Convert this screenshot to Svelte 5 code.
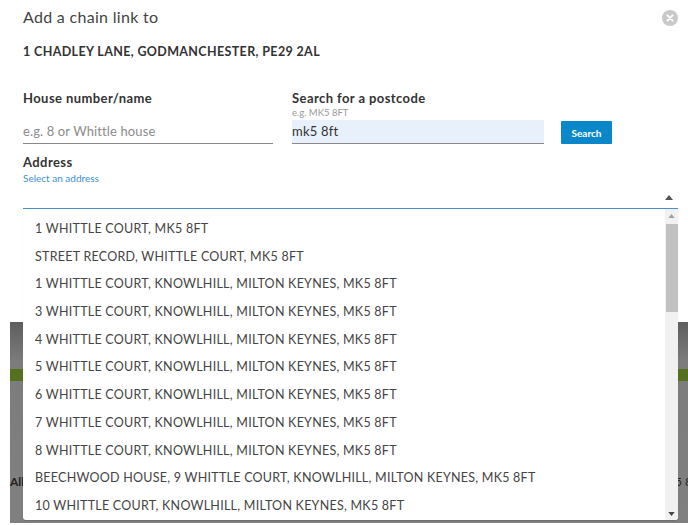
<script>
  const rest = ['1 WHITTLE COURT, MK5 8FT','STREET RECORD, WHITTLE COURT, MK5 8FT','1 WHITTLE COURT, KNOWLHILL, MILTON KEYNES, MK5 8FT','3 WHITTLE COURT, KNOWLHILL, MILTON KEYNES, MK5 8FT','4 WHITTLE COURT, KNOWLHILL, MILTON KEYNES, MK5 8FT','5 WHITTLE COURT, KNOWLHILL, MILTON KEYNES, MK5 8FT','6 WHITTLE COURT, KNOWLHILL, MILTON KEYNES, MK5 8FT','7 WHITTLE COURT, KNOWLHILL, MILTON KEYNES, MK5 8FT','8 WHITTLE COURT, KNOWLHILL, MILTON KEYNES, MK5 8FT','BEECHWOOD HOUSE, 9 WHITTLE COURT, KNOWLHILL, MILTON KEYNES, MK5 8FT','10 WHITTLE COURT, KNOWLHILL, MILTON KEYNES, MK5 8FT'];
</script>

<div class="page">
  <div class="backdrop">
    <div class="band"></div>
    <span class="all">All</span>
    <span class="peek">5 8</span>
  </div>
  <div class="modal">
    <header class="head">
      <h2>Add a chain link to</h2>
      <button class="close" aria-label="Close">
        <svg viewBox="0 0 16 16" width="16" height="16"><circle cx="8" cy="8" r="8" fill="#c9c9c9"/><path d="M5.4 5.4l5.2 5.2M10.6 5.4l-5.2 5.2" stroke="#fff" stroke-width="2" stroke-linecap="round"/></svg>
      </button>
    </header>
    <p class="addr">1 CHADLEY LANE, GODMANCHESTER, PE29 2AL</p>
    <div class="fields">
      <div class="f1">
        <label for="h">House number/name</label>
        <input id="h" placeholder="e.g. 8 or Whittle house" />
      </div>
      <div class="f2">
        <label for="p">Search for a postcode</label>
        <small>e.g. MK5 8FT</small>
        <input id="p" class="filled" value="mk5 8ft" />
      </div>
      <button class="search">Search</button>
    </div>
    <div class="addrblock">
      <div class="lab">Address</div>
      <div class="hint">Select an address</div>
      <div class="select">
        <svg viewBox="0 0 8 5" width="8" height="5"><path d="M4 0l4 5H0z" fill="#555"/></svg>
      </div>
      <div class="drop">
        <ul>
          {#each rest as r}<li>{r}</li>{/each}
        </ul>
        <div class="bar">
          <svg class="up" viewBox="0 0 8 5" width="7" height="4"><path d="M4 0l4 5H0z" fill="#a0a0a0"/></svg>
          <div class="thumb"></div>
          <svg class="down" viewBox="0 0 8 5" width="7" height="4"><path d="M4 5l4-5H0z" fill="#444"/></svg>
        </div>
      </div>
    </div>
  </div>
</div>

<style>
  :global(body) { margin: 0; background: #fff; }
  .page { position: relative; width: 688px; height: 525px; overflow: hidden; font-family: "Lato", "Noto Sans", sans-serif; color: #333; }
  .backdrop { position: absolute; left: 10px; right: 0; top: 322px; bottom: 2px; background: linear-gradient(#5e5e5e, #7c7c7c 40px, #808080); }
  .band { margin-top: 47px; height: 12px; background: #55701e; }
  .all { position: absolute; left: 0; top: 152px; font-size: 12px; font-weight: 700; color: #222; }
  .peek { position: absolute; left: 665px; top: 152px; font-size: 12px; color: #222; white-space: nowrap; }
  .modal { position: relative; padding: 0 10px 0 23px; height: 209px; box-sizing: border-box; }
  .head { display: flex; justify-content: space-between; align-items: center; padding-top: 4px; height: 28px; box-sizing: border-box; }
  h2 { margin: 0; font-size: 16px; font-weight: 400; color: #444; letter-spacing: .3px; }
  .close { padding: 0; border: 0; background: none; display: flex; position: relative; top: 2px; }
  .addr { margin: 17px 0 0; font-size: 12.5px; font-weight: 700; color: #333; letter-spacing: .36px; line-height: 14px; }
  .fields { display: flex; align-items: flex-end; margin-top: 31px; height: 54px; }
  .f1 { width: 250px; margin-right: 19px; display: flex; flex-direction: column; height: 54px; justify-content: space-between; }
  .f2 { width: 252px; margin-right: 17px; display: flex; flex-direction: column; }
  label, .lab { font-size: 13px; font-weight: 700; color: #333; line-height: 16px; letter-spacing: .42px; }
  small { font-size: 9.5px; color: #999; line-height: 10px; margin: 2px 0; }
  input { font: inherit; font-size: 13px; border: 0; border-bottom: 1px solid #888; height: 24px; padding: 0 0 2px; width: 100%; outline: 0; box-sizing: border-box; color: #333; background: #fff; letter-spacing: .2px; }
  input::placeholder { color: #8c8c8c; opacity: 1; letter-spacing: .12px; }
  input.filled { background: #e8f0fb; }
  .search { width: 51px; height: 23px; border: 0; border-radius: 1px; background: #0a87c8; color: #fff; font: inherit; font-size: 10px; font-weight: 700; padding: 0; }
  .addrblock { position: relative; margin-top: 11px; }
  .lab { line-height: 14px; }
  .hint { font-size: 10px; line-height: 12px; margin-top: 3px; color: #3d8fd1; }
  .select { height: 24px; border-bottom: 1px solid #4a90cf; display: flex; justify-content: flex-end; align-items: center; padding-right: 5px; }
  .select svg { margin-top: 2px; }
  .drop { position: absolute; left: 0; right: 0; top: 54px; height: 311px; background: #fff; display: flex; border-radius: 0 0 3px 3px; box-shadow: 0 1px 1px rgba(0,0,0,.15); overflow: hidden; }
  ul { list-style: none; margin: 0; padding: 6px 0 0 12px; flex: 1; }
  li { height: 27.7px; line-height: 27.7px; font-size: 12.5px; color: #444; letter-spacing: .25px; white-space: nowrap; }
  .bar { width: 13px; background: #f1f1f1; display: flex; flex-direction: column; align-items: center; position: relative; }
  .up { margin-top: 5px; }
  .thumb { width: 12px; height: 88px; background: #c1c1c1; margin-top: 6px; }
  .down { position: absolute; bottom: 4px; left: 3px; }
</style>
